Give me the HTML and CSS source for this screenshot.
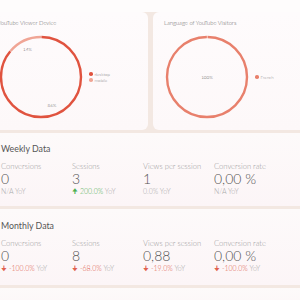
FILE: index.html
```html
<!DOCTYPE html>
<html>
<head>
<meta charset="utf-8">
<link rel="stylesheet" href="styles.css">
</head>
<body>
<div class="topbar"></div>
<div class="page">
  <div class="charts">
    <div class="card chart-card">
      <div class="chart-title">YouTube Viewer Device</div>
      <div class="chart-body">
        <svg class="donut" width="84" height="84" viewBox="0 0 84 84">
          <g transform="rotate(-90 42 42)">
            <circle cx="42" cy="42" r="40" fill="none" stroke="#e0533f" stroke-width="2.4" stroke-dasharray="215.6 251.3" stroke-dashoffset="-0.4"/>
            <circle cx="42" cy="42" r="40" fill="none" stroke="#f0a595" stroke-width="2.4" stroke-dasharray="34.6 251.3" stroke-dashoffset="-216.4"/>
          </g>
          <text x="28.5" y="16" class="pct">14%</text>
          <text x="53" y="72" class="pct">86%</text>
        </svg>
        <div class="legend">
          <div class="legend-item"><span class="dot dot-red"></span>desktop</div>
          <div class="legend-item"><span class="dot dot-pink"></span>mobile</div>
        </div>
      </div>
    </div>
    <div class="card chart-card">
      <div class="chart-title">Language of YouTube Visitors</div>
      <div class="chart-body">
        <svg class="donut" width="84" height="84" viewBox="0 0 84 84">
          <g transform="rotate(-90 42 42)">
            <circle cx="42" cy="42" r="40" fill="none" stroke="#e8806c" stroke-width="2.4" stroke-dasharray="250.3 251.3" stroke-dashoffset="-0.5"/>
          </g>
          <text x="42" y="43.5" class="pct">100%</text>
        </svg>
        <div class="legend">
          <div class="legend-item"><span class="dot dot-salmon"></span>French</div>
        </div>
      </div>
    </div>
  </div>

  <div class="card data-card">
    <div class="data-title">Weekly Data</div>
    <div class="metrics">
      <div class="metric"><div class="m-label">Conversions</div><div class="m-value">0</div><div class="m-yoy">N/A YoY</div></div>
      <div class="metric"><div class="m-label">Sessions</div><div class="m-value">3</div><div class="m-yoy"><span class="up">&#129033; 200.0%</span> YoY</div></div>
      <div class="metric"><div class="m-label">Views per session</div><div class="m-value">1</div><div class="m-yoy">0.0% YoY</div></div>
      <div class="metric"><div class="m-label">Conversion rate</div><div class="m-value">0,00 %</div><div class="m-yoy">N/A YoY</div></div>
    </div>
  </div>

  <div class="card data-card data-card-tall">
    <div class="data-title">Monthly Data</div>
    <div class="metrics">
      <div class="metric"><div class="m-label">Conversions</div><div class="m-value">0</div><div class="m-yoy"><span class="down">&#129035; -100.0%</span> YoY</div></div>
      <div class="metric"><div class="m-label">Sessions</div><div class="m-value">8</div><div class="m-yoy"><span class="down">&#129035; -68.0%</span> YoY</div></div>
      <div class="metric"><div class="m-label">Views per session</div><div class="m-value">0,88</div><div class="m-yoy"><span class="down">&#129035; -19.0%</span> YoY</div></div>
      <div class="metric"><div class="m-label">Conversion rate</div><div class="m-value">0,00 %</div><div class="m-yoy"><span class="down">&#129035; -100.0%</span> YoY</div></div>
    </div>
  </div>

  <div class="card data-card">
    <div class="data-title">Annual Data</div>
  </div>
</div>
</body>
</html>
```

FILE: styles.css
```css
html, body {
  margin: 0;
  padding: 0;
}
body {
  background: #f3e8e2;
  font-family: Lato, "Open Sans", sans-serif;
  font-weight: 300;
  color: #555;
  overflow: hidden;
  width: 300px;
  height: 300px;
}
.topbar {
  height: 12px;
  background: #fefcfc;
}
.page {
  margin-left: -13px;
  width: 327px;
  display: flex;
  flex-direction: column;
  gap: 3px;
}
.card {
  background: linear-gradient(180deg, #fdfafa 0%, #fcf5f7 100%);
  border-radius: 6px;
}
.charts {
  display: flex;
  gap: 5px;
}
.chart-card {
  width: 161px;
  height: 118px;
  box-sizing: border-box;
  padding: 6px 11px 0 11px;
  background: linear-gradient(180deg, #fefbfc 0%, #fdf8f9 100%);
}
.chart-title {
  font-size: 5.8px;
  line-height: 10px;
  color: #666;
  white-space: nowrap;
}
.chart-body {
  display: flex;
  align-items: center;
  margin-top: 7px;
  margin-left: 1px;
}
.donut {
  display: block;
  flex: none;
}
.pct {
  font-family: Lato, sans-serif;
  font-size: 4.6px;
  fill: #555;
  text-anchor: middle;
}
.legend {
  margin-left: 6px;
  display: flex;
  flex-direction: column;
  gap: 1px;
}
.legend-item {
  display: flex;
  align-items: center;
  gap: 2px;
  font-size: 4.5px;
  line-height: 5px;
  color: #888;
}
.dot {
  width: 3.5px;
  height: 3.5px;
  border-radius: 50%;
  display: inline-block;
}
.dot-red { background: #e0533f; }
.dot-pink { background: #f0a595; }
.dot-salmon { background: #e8806c; }

.data-card {
  padding: 10px 14px 11px 14px;
}
.data-card-tall {
  padding-top: 11px;
  padding-bottom: 13px;
}
.data-title {
  font-size: 8.8px;
  line-height: 12px;
  color: #555;
  font-weight: 400;
}
.metrics {
  display: grid;
  grid-template-columns: repeat(4, 71px);
  margin-top: 7px;
}
.m-label {
  font-size: 7.6px;
  line-height: 8px;
  color: #999;
  white-space: nowrap;
}
.m-value {
  font-size: 14px;
  line-height: 17px;
  color: #555;
  white-space: nowrap;
}
.m-yoy {
  font-size: 7px;
  line-height: 8px;
  color: #aaa;
  white-space: nowrap;
}
.up { color: #4caf50; }
.down { color: #e0604e; }
```
